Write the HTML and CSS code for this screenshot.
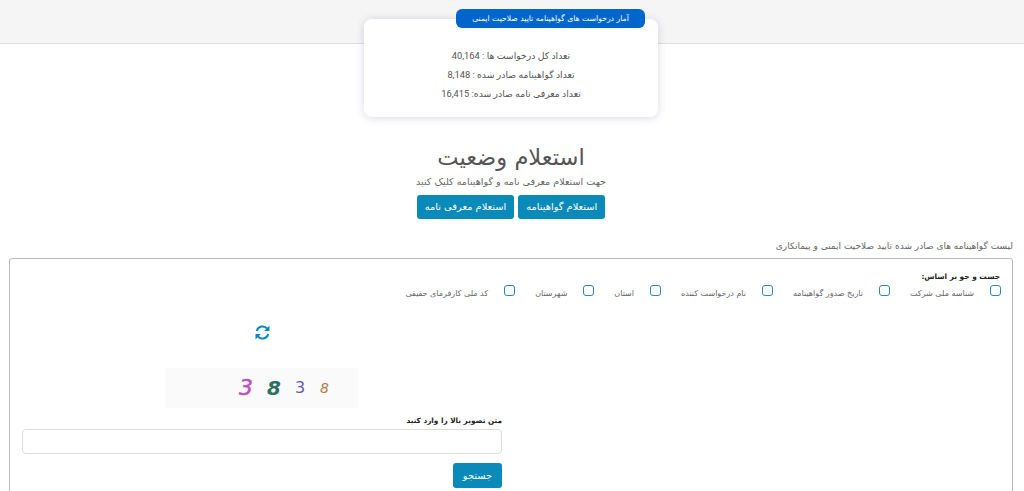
FILE: index.html
```html
<!DOCTYPE html>
<html lang="fa" dir="rtl">
<head>
<meta charset="utf-8">
<title>استعلام وضعیت</title>
<link rel="stylesheet" href="styles.css">
</head>
<body>
<header class="topbar"></header>
<section class="stats">
  <div class="stats-badge">آمار درخواست های گواهینامه تایید صلاحیت ایمنی</div>
  <p>تعداد کل درخواست ها : 40,164</p>
  <p>تعداد گواهینامه صادر شده : 8,148</p>
  <p>تعداد معرفی نامه صادر شده: 16,415</p>
</section>
<section class="inquiry">
  <h1>استعلام وضعیت</h1>
  <p>جهت استعلام معرفی نامه و گواهینامه کلیک کنید</p>
  <div class="inquiry-actions">
    <button class="btn" type="button">استعلام گواهینامه</button>
    <button class="btn" type="button">استعلام معرفی نامه</button>
  </div>
</section>
<p class="list-title">لیست گواهینامه های صادر شده تایید صلاحیت ایمنی و پیمانکاری</p>
<section class="panel">
  <div class="search-title">جست و جو بر اساس:</div>
  <div class="filters">
    <label class="filter"><span class="box"></span><span>شناسه ملی شرکت</span></label>
    <label class="filter"><span class="box"></span><span>تاریخ صدور گواهینامه</span></label>
    <label class="filter"><span class="box"></span><span>نام درخواست کننده</span></label>
    <label class="filter"><span class="box"></span><span>استان</span></label>
    <label class="filter"><span class="box"></span><span>شهرستان</span></label>
    <label class="filter"><span class="box"></span><span>کد ملی کارفرمای حقیقی</span></label>
  </div>
  <div class="captcha-col">
    <div class="captcha-area">
      <svg class="refresh" viewBox="0 0 16 16" width="17" height="17" aria-hidden="true">
        <path d="M2.6 6.6A5.6 5.6 0 0 1 12.4 4.4" fill="none" stroke="#0a86c0" stroke-width="1.9"/>
        <path d="M14.6 1.4V6.6H9.6Z" fill="#0a86c0"/>
        <path d="M13.4 9.4A5.6 5.6 0 0 1 3.6 11.6" fill="none" stroke="#0a86c0" stroke-width="1.9"/>
        <path d="M1.4 14.6V9.4H6.4Z" fill="#0a86c0"/>
      </svg>
      <div class="captcha-img" dir="ltr">
        <span class="d d1">3</span><span class="d d2">8</span><span class="d d3">3</span><span class="d d4">8</span>
      </div>
    </div>
    <label class="captcha-label" for="captcha">متن تصویر بالا را وارد کنید</label>
    <input class="captcha-input" id="captcha" type="text">
    <button class="btn search" type="button">جستجو</button>
  </div>
</section>
</body>
</html>
```
FILE: styles.css
```css
html, body { margin: 0; padding: 0; height: 491px; overflow: hidden; }
body { font-family: "DejaVu Sans", sans-serif; background: #fff; color: #555; font-size: 10px; }
p { margin: 0; }
.topbar { height: 43px; background: #f5f5f6; border-bottom: 1px solid #dedede; }
.stats { position: relative; box-sizing: border-box; width: 294px; height: 98px; margin: -25px auto 0; padding-top: 27px; background: #fff; border-radius: 8px; box-shadow: 0 1px 8px rgba(60,70,120,.2); text-align: center; transform: translateX(-1px); }
.stats p { font-family: Roboto, "DejaVu Sans", sans-serif; font-size: 9.3px; line-height: 19px; color: #555; }
.stats-badge { position: absolute; top: -10px; right: 13px; width: 189px; height: 19px; line-height: 19px; background: #0066cc; color: #fff; border-radius: 6px; font-size: 7.7px; text-align: center; }
.inquiry { margin-top: 25px; text-align: center; transform: translateX(-1px); }
.inquiry h1 { margin: 0 0 2px; font-size: 22.6px; font-weight: 400; line-height: 30px; color: #555; }
.inquiry p { font-size: 9.6px; line-height: 16px; color: #666; }
.inquiry-actions { display: flex; justify-content: center; gap: 4px; margin-top: 5px; }
.btn { box-sizing: border-box; height: 24px; padding: 0 8px; border: 0; border-radius: 3px; background: #0a8ab8; color: #fff; font: 9.85px/24px "DejaVu Sans", sans-serif; }
.list-title { margin: 20px 11px 0 0; font-size: 9px; line-height: 14px; color: #666; }
.panel { box-sizing: border-box; height: 300px; margin: 5px 11px 0 9px; padding: 11px 12px 0; border: 1px solid #bbb; border-radius: 3px; }
.search-title { font-size: 7.4px; font-weight: 700; color: #222; line-height: 13px; }
.filters { display: flex; gap: 20px; margin: 3px -1px 0 0; font-size: 8px; color: #666; }
.filter { display: flex; align-items: center; gap: 16px; height: 14px; }
.box { box-sizing: border-box; width: 11px; height: 11px; border: 1.5px solid #2a87b8; border-radius: 3px; margin-top: -5px; }
.captcha-col { display: flex; flex-direction: column; align-items: flex-start; width: 480px; margin: 24px auto 0 0; }
.captcha-area { display: flex; flex-direction: column; align-items: center; width: 100%; }
.refresh { margin-bottom: 27px; }
.captcha-img { display: flex; align-items: center; justify-content: flex-start; box-sizing: border-box; width: 192px; height: 40px; padding-left: 73px; background: #fafafa; }
.d { display: block; font-family: "DejaVu Sans", sans-serif; line-height: 1; }
.d1 { font-size: 22px; font-style: italic; color: #c050c0; margin-right: 14px; -webkit-text-stroke: .5px #c050c0; }
.d2 { font-size: 20px; font-style: italic; font-weight: 700; color: #2f6f5f; margin-right: 14px; }
.d3 { font-size: 16px; color: #6a5aa0; margin-right: 15px; }
.d4 { font-size: 14px; font-style: italic; color: #b08050; }
.captcha-label { margin-top: 6px; font-size: 7.3px; font-weight: 700; color: #222; line-height: 13px; }
.captcha-input { box-sizing: border-box; width: 480px; height: 25px; margin-top: 2px; border: 1px solid #ddd; border-radius: 4px; background: #fff; }
.search { width: 49px; height: 25px; margin-top: 9px; padding: 0; }
```
